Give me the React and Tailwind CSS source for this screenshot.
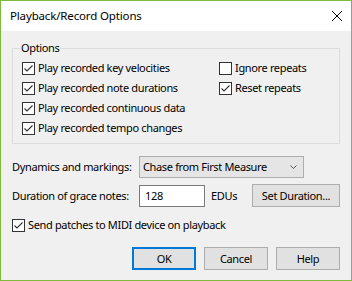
import React from "react";

function Check({ checked }) {
  return (
    <svg width="13" height="13" viewBox="0 0 13 13" className="shrink-0 block">
      <rect x="0.5" y="0.5" width="12" height="12" fill="#fff" stroke="#333" />
      {checked && (
        <path d="M2.5 6.5 L5 9 L10.5 3.5" fill="none" stroke="#333" strokeWidth="1.1" />
      )}
    </svg>
  );
}

function CheckRow({ checked, label }) {
  return (
    <div className="h-[20px] flex items-center gap-[3px]">
      <Check checked={checked} />
      <span className="whitespace-nowrap">{label}</span>
    </div>
  );
}

function Btn({ children, primary, className = "" }) {
  return (
    <div
      className={
        "h-[23px] flex items-center justify-center bg-[#e1e1e1] whitespace-nowrap " +
        (primary ? "border-2 border-[#0078d7] " : "border border-[#adadad] ") +
        className
      }
    >
      {children}
    </div>
  );
}

export default function App() {
  return (
    <div
      className="w-[352px] h-[281px] border border-[#7fba3a] bg-[#f0f0f0] flex flex-col text-[11px] leading-[16px] tracking-[-0.35px] text-black overflow-hidden"
      style={{ fontFamily: '"Noto Sans", sans-serif' }}
    >
      <div className="h-[30px] bg-white flex items-center justify-between pl-[9px] pr-[9px] shrink-0">
        <span className="text-[11.5px] tracking-[-0.15px]">Playback/Record Options</span>
        <svg width="10" height="10" viewBox="0 0 10 10" className="block">
          <path d="M0 0 L10 10 M10 0 L0 10" stroke="#000" strokeWidth="1" />
        </svg>
      </div>
      <div className="flex flex-col px-[11px]">
        <fieldset className="mt-[9px] border border-[#dcdcdc] pl-[9px] pb-[5px] pt-[2px]">
          <legend className="px-[1px] ml-[-2px] leading-[16px]">Options</legend>
          <div className="grid grid-cols-[197px_1fr]">
            <div className="flex flex-col">
              <CheckRow checked label="Play recorded key velocities" />
              <CheckRow checked label="Play recorded note durations" />
              <CheckRow checked label="Play recorded continuous data" />
              <CheckRow checked label="Play recorded tempo changes" />
            </div>
            <div className="flex flex-col">
              <CheckRow label="Ignore repeats" />
              <CheckRow checked label="Reset repeats" />
            </div>
          </div>
        </fieldset>

        <div className="mt-[12px] flex items-center">
          <span className="w-[127px] shrink-0 whitespace-nowrap">Dynamics and markings:</span>
          <div className="w-[165px] h-[22px] bg-[#e5e5e5] border border-[#adadad] flex items-center justify-between pl-[3px] pr-[6px]">
            <span className="whitespace-nowrap">Chase from First Measure</span>
            <svg width="7" height="4" viewBox="0 0 7 4" className="block">
              <path d="M0.5 0.5 L3.5 3.5 L6.5 0.5" fill="none" stroke="#555" strokeWidth="1" />
            </svg>
          </div>
        </div>

        <div className="mt-[6px] flex items-center">
          <span className="w-[127px] shrink-0 whitespace-nowrap">Duration of grace notes:</span>
          <div className="w-[66px] h-[22px] bg-white border border-[#7a7a7a] flex items-center pl-[5px]">
            128
          </div>
          <span className="ml-[6px]">EDUs</span>
          <Btn className="ml-auto w-[88px]">Set Duration...</Btn>
        </div>

        <div className="mt-[8px]">
          <CheckRow checked label="Send patches to MIDI device on playback" />
        </div>

        <div className="mt-[12px] flex justify-end gap-[8px]">
          <Btn primary className="w-[64px]">OK</Btn>
          <Btn className="w-[64px]">Cancel</Btn>
          <Btn className="w-[64px]">Help</Btn>
        </div>
      </div>
    </div>
  );
}
